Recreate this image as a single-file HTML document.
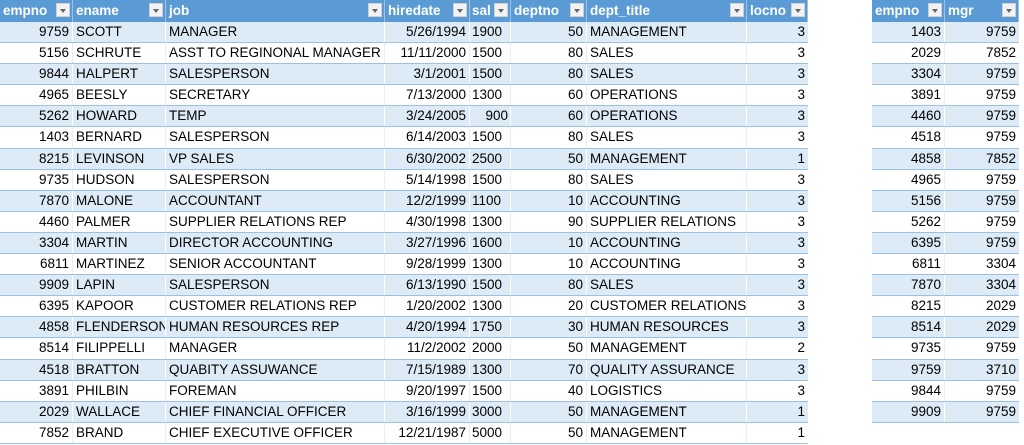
<!DOCTYPE html>
<html><head><meta charset="utf-8"><style>
body{margin:0;background:#fff;width:1024px;height:445px;overflow:hidden;font-family:"Liberation Sans",sans-serif;font-size:13.5px;}
.t{position:absolute;top:0;}
.row{display:flex;height:21.1px;box-sizing:border-box;border-bottom:1px solid #9bc2e6;}
.row:nth-child(even){background:#ddebf7;}
.row>div{box-sizing:border-box;padding:0 3px;white-space:nowrap;overflow:hidden;line-height:20px;border-right:1px solid #e8eef6;}
.row:nth-child(even)>div{border-right-color:#fff;}
.h{background:#5b9bd5;height:22px;border-bottom:none;}
.h>div{color:#fff;font-weight:bold;position:relative;line-height:22px;border-right:1px solid #9bc2e6 !important;}
.h i{position:absolute;right:2px;top:3px;width:14px;height:14px;background:#f2f2f2;border:1px solid #d0d0d0;box-sizing:border-box;}
.h i:after{content:"";position:absolute;left:3px;top:5px;border-left:3px solid transparent;border-right:3px solid transparent;border-top:4px solid #666;}
.r{text-align:right}
#t1{left:0;width:808px}
#t2{left:872px;width:147px}
#t1 .row>div:nth-child(1){width:73px}
#t1 .row>div:nth-child(2){width:93px}
#t1 .row>div:nth-child(3){width:219px}
#t1 .row>div:nth-child(4){width:85px}
#t1 .row>div:nth-child(5){width:41px;padding:0 2px}
#t1 .row>div:nth-child(6){width:76px}
#t1 .row>div:nth-child(7){width:160px}
#t1 .row>div:nth-child(8){width:61px}
#t2 .row>div:nth-child(1){width:73px}
#t2 .row>div:nth-child(2){width:74px}
.row>div:last-child{border-right:none}
</style></head><body>
<div class="t" id="t1">
<div class="row h"><div>empno<i></i></div><div>ename<i></i></div><div>job<i></i></div><div>hiredate<i></i></div><div>sal<i></i></div><div>deptno<i></i></div><div>dept_title<i></i></div><div>locno<i></i></div></div>
<div class="row"><div class="r">9759</div><div>SCOTT</div><div>MANAGER</div><div class="r">5/26/1994</div><div>1900</div><div class="r">50</div><div>MANAGEMENT</div><div class="r">3</div></div>
<div class="row"><div class="r">5156</div><div>SCHRUTE</div><div>ASST TO REGINONAL MANAGER</div><div class="r">11/11/2000</div><div>1500</div><div class="r">80</div><div>SALES</div><div class="r">3</div></div>
<div class="row"><div class="r">9844</div><div>HALPERT</div><div>SALESPERSON</div><div class="r">3/1/2001</div><div>1500</div><div class="r">80</div><div>SALES</div><div class="r">3</div></div>
<div class="row"><div class="r">4965</div><div>BEESLY</div><div>SECRETARY</div><div class="r">7/13/2000</div><div>1300</div><div class="r">60</div><div>OPERATIONS</div><div class="r">3</div></div>
<div class="row"><div class="r">5262</div><div>HOWARD</div><div>TEMP</div><div class="r">3/24/2005</div><div class="r">900</div><div class="r">60</div><div>OPERATIONS</div><div class="r">3</div></div>
<div class="row"><div class="r">1403</div><div>BERNARD</div><div>SALESPERSON</div><div class="r">6/14/2003</div><div>1500</div><div class="r">80</div><div>SALES</div><div class="r">3</div></div>
<div class="row"><div class="r">8215</div><div>LEVINSON</div><div>VP SALES</div><div class="r">6/30/2002</div><div>2500</div><div class="r">50</div><div>MANAGEMENT</div><div class="r">1</div></div>
<div class="row"><div class="r">9735</div><div>HUDSON</div><div>SALESPERSON</div><div class="r">5/14/1998</div><div>1500</div><div class="r">80</div><div>SALES</div><div class="r">3</div></div>
<div class="row"><div class="r">7870</div><div>MALONE</div><div>ACCOUNTANT</div><div class="r">12/2/1999</div><div>1100</div><div class="r">10</div><div>ACCOUNTING</div><div class="r">3</div></div>
<div class="row"><div class="r">4460</div><div>PALMER</div><div>SUPPLIER RELATIONS REP</div><div class="r">4/30/1998</div><div>1300</div><div class="r">90</div><div>SUPPLIER RELATIONS</div><div class="r">3</div></div>
<div class="row"><div class="r">3304</div><div>MARTIN</div><div>DIRECTOR ACCOUNTING</div><div class="r">3/27/1996</div><div>1600</div><div class="r">10</div><div>ACCOUNTING</div><div class="r">3</div></div>
<div class="row"><div class="r">6811</div><div>MARTINEZ</div><div>SENIOR ACCOUNTANT</div><div class="r">9/28/1999</div><div>1300</div><div class="r">10</div><div>ACCOUNTING</div><div class="r">3</div></div>
<div class="row"><div class="r">9909</div><div>LAPIN</div><div>SALESPERSON</div><div class="r">6/13/1990</div><div>1500</div><div class="r">80</div><div>SALES</div><div class="r">3</div></div>
<div class="row"><div class="r">6395</div><div>KAPOOR</div><div>CUSTOMER RELATIONS REP</div><div class="r">1/20/2002</div><div>1300</div><div class="r">20</div><div>CUSTOMER RELATIONS</div><div class="r">3</div></div>
<div class="row"><div class="r">4858</div><div>FLENDERSON</div><div>HUMAN RESOURCES REP</div><div class="r">4/20/1994</div><div>1750</div><div class="r">30</div><div>HUMAN RESOURCES</div><div class="r">3</div></div>
<div class="row"><div class="r">8514</div><div>FILIPPELLI</div><div>MANAGER</div><div class="r">11/2/2002</div><div>2000</div><div class="r">50</div><div>MANAGEMENT</div><div class="r">2</div></div>
<div class="row"><div class="r">4518</div><div>BRATTON</div><div>QUABITY ASSUWANCE</div><div class="r">7/15/1989</div><div>1300</div><div class="r">70</div><div>QUALITY ASSURANCE</div><div class="r">3</div></div>
<div class="row"><div class="r">3891</div><div>PHILBIN</div><div>FOREMAN</div><div class="r">9/20/1997</div><div>1500</div><div class="r">40</div><div>LOGISTICS</div><div class="r">3</div></div>
<div class="row"><div class="r">2029</div><div>WALLACE</div><div>CHIEF FINANCIAL OFFICER</div><div class="r">3/16/1999</div><div>3000</div><div class="r">50</div><div>MANAGEMENT</div><div class="r">1</div></div>
<div class="row"><div class="r">7852</div><div>BRAND</div><div>CHIEF EXECUTIVE OFFICER</div><div class="r">12/21/1987</div><div>5000</div><div class="r">50</div><div>MANAGEMENT</div><div class="r">1</div></div>
</div>
<div class="t" id="t2">
<div class="row h"><div>empno<i></i></div><div>mgr<i></i></div></div>
<div class="row"><div class="r">1403</div><div class="r">9759</div></div>
<div class="row"><div class="r">2029</div><div class="r">7852</div></div>
<div class="row"><div class="r">3304</div><div class="r">9759</div></div>
<div class="row"><div class="r">3891</div><div class="r">9759</div></div>
<div class="row"><div class="r">4460</div><div class="r">9759</div></div>
<div class="row"><div class="r">4518</div><div class="r">9759</div></div>
<div class="row"><div class="r">4858</div><div class="r">7852</div></div>
<div class="row"><div class="r">4965</div><div class="r">9759</div></div>
<div class="row"><div class="r">5156</div><div class="r">9759</div></div>
<div class="row"><div class="r">5262</div><div class="r">9759</div></div>
<div class="row"><div class="r">6395</div><div class="r">9759</div></div>
<div class="row"><div class="r">6811</div><div class="r">3304</div></div>
<div class="row"><div class="r">7870</div><div class="r">3304</div></div>
<div class="row"><div class="r">8215</div><div class="r">2029</div></div>
<div class="row"><div class="r">8514</div><div class="r">2029</div></div>
<div class="row"><div class="r">9735</div><div class="r">9759</div></div>
<div class="row"><div class="r">9759</div><div class="r">3710</div></div>
<div class="row"><div class="r">9844</div><div class="r">9759</div></div>
<div class="row"><div class="r">9909</div><div class="r">9759</div></div>
</div>
</body></html>
